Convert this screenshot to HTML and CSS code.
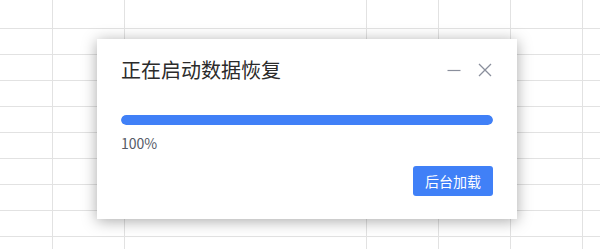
FILE: index.html
```html
<!DOCTYPE html>
<html lang="zh-CN">
<head>
  <meta charset="UTF-8">
  <title>正在启动数据恢复</title>
  <link rel="stylesheet" href="styles.css">
</head>
<body>
  <div class="sheet"></div>

  <!-- Диалог восстановления -->
  <div class="dialog">
    <div class="dialog-header">
      <span class="dialog-title">正在启动数据恢复</span>
      <div class="dialog-tools">
        <svg class="tool" width="14" height="14" viewBox="0 0 14 14">
          <line x1="0.5" y1="7.5" x2="13.5" y2="7.5" stroke="#8a8f9c" stroke-width="1.2"/>
        </svg>
        <svg class="tool" width="14" height="14" viewBox="0 0 14 14">
          <path d="M1 1 L13 13 M13 1 L1 13" stroke="#8a8f9c" stroke-width="1.3" fill="none"/>
        </svg>
      </div>
    </div>
    <div class="progress">
      <div class="progress-bar" style="width: 100%"></div>
    </div>
    <div class="progress-text">100%</div>
    <div class="dialog-footer">
      <button class="btn-primary">后台加载</button>
    </div>
  </div>
</body>
</html>
```

FILE: styles.css
```css
body {
  margin: 0;
  font-family: "Noto Sans CJK SC", "Noto Sans", sans-serif;
  background: #fff;
  color: #333;
}
.sheet {
  width: 600px;
  height: 249px;
  background-image:
    linear-gradient(to right,
      transparent 52px, #e2e2e2 52px 53px,
      transparent 53px 124px, #e2e2e2 124px 125px,
      transparent 125px 366px, #e2e2e2 366px 367px,
      transparent 367px 438px, #e2e2e2 438px 439px,
      transparent 439px 510px, #e2e2e2 510px 511px,
      transparent 511px 582px, #e2e2e2 582px 583px,
      transparent 583px),
    repeating-linear-gradient(to bottom, transparent 0 25px, #e2e2e2 25px 26px);
  background-position: 0 0, 0 3px;
}
.dialog {
  position: absolute;
  left: 97px;
  top: 39px;
  width: 420px;
  height: 180px;
  box-sizing: border-box;
  padding: 17px 24px 25px;
  background: #fff;
  box-shadow: 0 2px 14px rgba(0, 0, 0, 0.34);
}
.dialog-header {
  display: flex;
  justify-content: space-between;
  align-items: center;
  height: 28px;
}
.dialog-title {
  font-size: 20px;
  line-height: 28px;
  color: #2b2b2b;
}
.dialog-tools {
  display: flex;
  gap: 17px;
  margin-right: 1px;
}
.tool {
  display: block;
}
.progress {
  margin-top: 31px;
  height: 10px;
  border-radius: 5px;
  background: #e8ecf3;
  overflow: hidden;
}
.progress-bar {
  height: 100%;
  border-radius: 5px;
  background: #4080f7;
}
.progress-text {
  margin-top: 8px;
  font-size: 14px;
  line-height: 20px;
  color: #555a66;
}
.dialog-footer {
  display: flex;
  justify-content: flex-end;
  margin-top: 13px;
}
.btn-primary {
  width: 80px;
  height: 30px;
  border: none;
  border-radius: 3px;
  background: #4080f7;
  color: #fff;
  font-family: inherit;
  font-size: 14px;
  padding: 0;
  cursor: pointer;
}
```
